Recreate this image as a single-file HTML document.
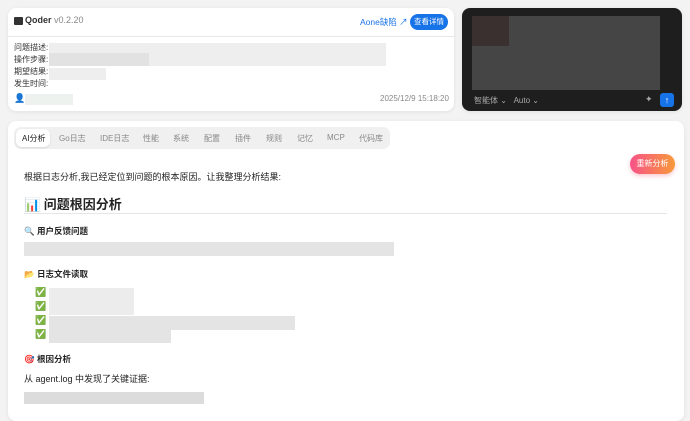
<!DOCTYPE html>
<html><head><meta charset="utf-8"><style>
*{box-sizing:border-box;margin:0;padding:0}
body{width:690px;height:407px;overflow:hidden;background:#f3f3f3;font-family:"Liberation Sans","Noto Sans CJK SC",sans-serif;position:relative;color:#222}
.card{position:absolute;background:#fff;border-radius:8px;box-shadow:0 1px 4px rgba(0,0,0,.08)}
.g{position:absolute;background:#e4e4e4}
.t{position:absolute;white-space:nowrap}
.tab{position:absolute;top:12px;font-size:8px;color:#888}
</style></head><body>
<div class="card" style="left:8px;top:8px;width:446px;height:103px">
  <div style="position:absolute;left:0;right:0;top:28px;height:1px;background:#e8e8e8"></div>
  <div class="t" style="left:6px;top:9px;width:9px;height:8px;background:#333;border-radius:1px"></div>
  <div class="t" style="left:17px;top:7px;font-size:9px;font-weight:bold;color:#333">Qoder <span style="font-weight:normal;color:#888">v0.2.20</span></div>
  <div class="t" style="left:352px;top:8px;font-size:8.5px;color:#1a73e8">Aone缺陷 ↗</div>
  <div class="t" style="left:402px;top:6px;width:38px;height:16px;background:#1773e8;border-radius:8px;color:#fff;font-size:7.5px;text-align:center;line-height:16px">查看详情</div>
  <div class="t" style="left:6px;top:34px;font-size:8px;line-height:12px;color:#333">问题描述:<br>操作步骤:<br>期望结果:<br>发生时间:</div>
  <div class="g" style="left:41px;top:35px;width:337px;height:23px;background:#eee"></div>
  <div class="g" style="left:41px;top:45px;width:100px;height:13px;background:#e2e2e2"></div>
  <div class="g" style="left:41px;top:60px;width:57px;height:12px;background:#eee"></div>
  <div class="t" style="left:6px;top:85px;font-size:9px">👤</div>
  <div class="g" style="left:17px;top:86px;width:48px;height:11px;background:#eef2ee"></div>
  <div class="t" style="left:372px;top:86px;font-size:8px;color:#888">2025/12/9 15:18:20</div>
</div>
<div class="card" style="left:462px;top:8px;width:220px;height:103px;background:#1e1e1e">
  <div class="g" style="left:10px;top:8px;width:188px;height:74px;background:#454545"></div>
  <div class="g" style="left:10px;top:8px;width:37px;height:30px;background:#3a3030"></div>
  <div class="t" style="left:12px;top:87px;font-size:8px;color:#aaa">智能体 ⌄ &nbsp;&nbsp;Auto ⌄</div>
  <div class="t" style="left:183px;top:86px;font-size:9px;color:#aaa">✦</div>
  <div class="t" style="left:198px;top:85px;width:14px;height:14px;background:#1773e8;border-radius:3px;color:#fff;font-size:9px;text-align:center;line-height:14px">↑</div>
</div>
<div class="card" style="left:8px;top:121px;width:676px;height:300px">
  <div style="position:absolute;left:6px;top:6px;width:376px;height:22px;background:#f0f0f0;border-radius:7px"></div>
  <div style="position:absolute;left:8px;top:8px;width:34px;height:18px;background:#fff;border-radius:6px;box-shadow:0 1px 2px rgba(0,0,0,.1)"></div>
  <div class="tab" style="left:14px;color:#222">AI分析</div>
  <div class="tab" style="left:51px">Go日志</div>
  <div class="tab" style="left:92px">IDE日志</div>
  <div class="tab" style="left:135px">性能</div>
  <div class="tab" style="left:165px">系统</div>
  <div class="tab" style="left:196px">配置</div>
  <div class="tab" style="left:227px">插件</div>
  <div class="tab" style="left:258px">规则</div>
  <div class="tab" style="left:289px">记忆</div>
  <div class="tab" style="left:319px">MCP</div>
  <div class="tab" style="left:351px">代码库</div>
  <div class="t" style="left:622px;top:33px;width:45px;height:20px;border-radius:10px;background:linear-gradient(90deg,#f75288,#f79a3a);color:#fff;font-size:8px;text-align:center;line-height:20px;box-shadow:0 2px 4px rgba(240,80,100,.3)">重新分析</div>
  <div class="t" style="left:16px;top:49px;font-size:9px">根据日志分析,我已经定位到问题的根本原因。让我整理分析结果:</div>
  <div class="t" style="left:16px;top:73px;font-size:13px;font-weight:bold">📊 问题根因分析</div>
  <div style="position:absolute;left:16px;top:92px;width:643px;height:1px;background:#e6e6e6"></div>
  <div class="t" style="left:16px;top:104px;font-size:8.5px;font-weight:bold">🔍 用户反馈问题</div>
  <div class="g" style="left:16px;top:121px;width:370px;height:14px"></div>
  <div class="t" style="left:16px;top:147px;font-size:8.5px;font-weight:bold">📂 日志文件读取</div>
  <div class="t" style="left:27px;top:164px;font-size:9px;line-height:14px">✅<br>✅<br>✅<br>✅</div>
  <div class="g" style="left:41px;top:167px;width:85px;height:27px;background:#ececec"></div>
  <div class="g" style="left:41px;top:195px;width:246px;height:14px"></div>
  <div class="g" style="left:41px;top:209px;width:122px;height:13px"></div>
  <div class="t" style="left:16px;top:232px;font-size:8.5px;font-weight:bold">🎯 根因分析</div>
  <div class="t" style="left:16px;top:251px;font-size:9px">从 agent.log 中发现了关键证据:</div>
  <div class="g" style="left:16px;top:271px;width:180px;height:12px;background:#dcdcdc"></div>
</div>
</body></html>
